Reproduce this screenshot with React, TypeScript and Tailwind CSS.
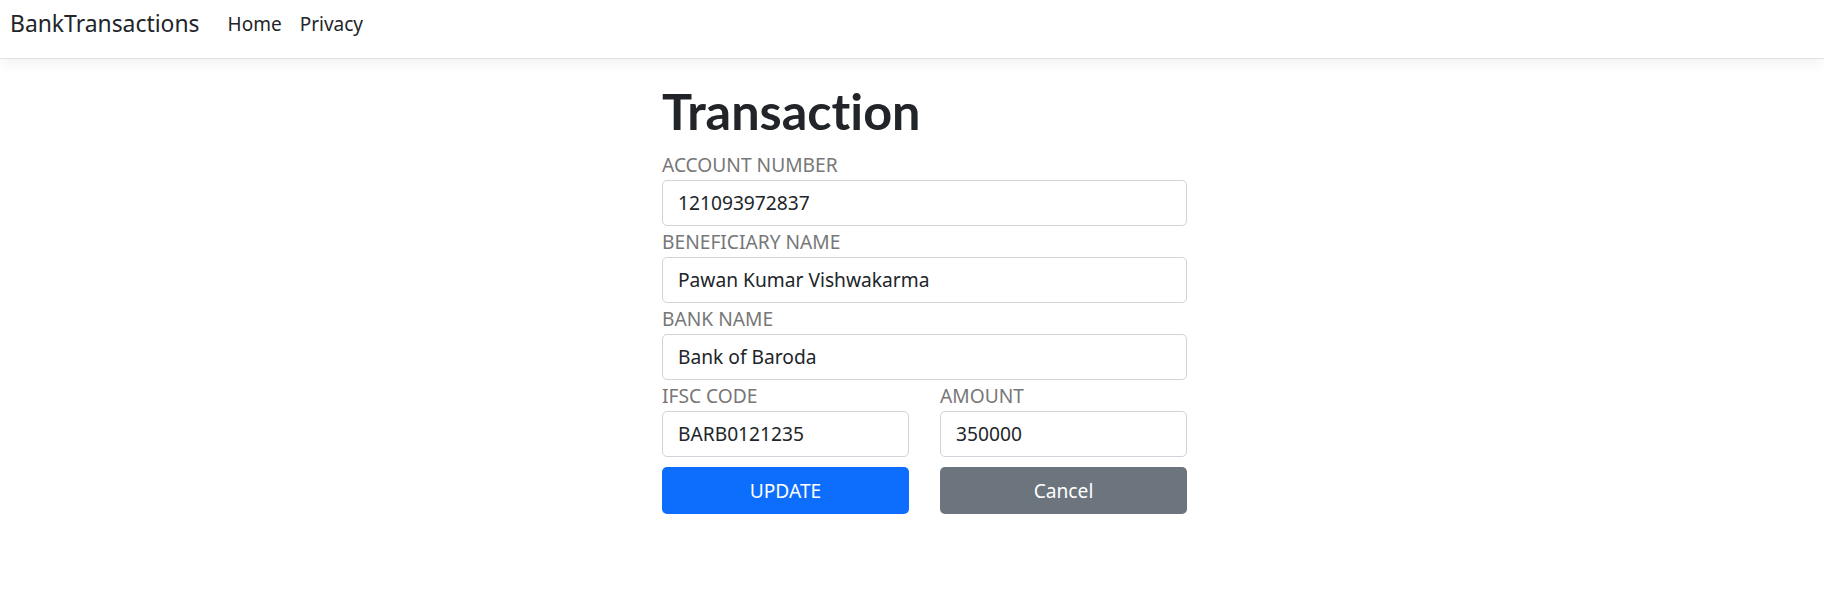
const font = { fontFamily: '"Segoe UI", "Noto Sans", sans-serif' }

function Field({ label, value }: { label: string; value: string }) {
  return (
    <div className="flex flex-col">
      <label className="h-[31px] text-[19.2px] leading-[31px] text-[#777]">{label}</label>
      <div className="flex h-[46px] items-center rounded-[5px] border border-[#ced4da] bg-white px-[15px] text-[19.2px] text-[#212529]">
        {value}
      </div>
    </div>
  )
}

export default function App() {
  return (
    <div className="min-h-[597px] bg-white" style={font}>
      {/* Navbar */}
      <nav className="flex h-[59px] items-start border-b border-[#dee2e6] bg-white pl-[10px] pt-[7px] shadow-[0_5px_14px_rgba(0,0,0,0.05)]">
        <span className="mr-[19px] text-[22.9px] leading-[34px] text-[#212529]">BankTransactions</span>
        <a className="px-[9px] text-[19px] leading-[34px] text-[#212529]">Home</a>
        <a className="px-[9px] text-[19px] leading-[34px] text-[#212529]">Privacy</a>
      </nav>

      {/* Form */}
      <main className="pl-[662px] pt-[22px]">
        <div className="w-[525px]">
          <h1
            className="mb-[8px] text-[50.4px] font-bold leading-[1.2] text-[#212529] [font-variant-ligatures:none]"
            style={{ fontFamily: 'Lato, "Noto Sans", sans-serif' }}
          >
            Transaction
          </h1>
          <Field label="ACCOUNT NUMBER" value="121093972837" />
          <Field label="BENEFICIARY NAME" value="Pawan Kumar Vishwakarma" />
          <Field label="BANK NAME" value="Bank of Baroda" />
          <div className="grid grid-cols-2 gap-x-[31px]">
            <Field label="IFSC CODE" value="BARB0121235" />
            <Field label="AMOUNT" value="350000" />
            <button className="mt-[10px] h-[47px] rounded-[5px] bg-[#0d6efd] text-[19.2px] text-white">UPDATE</button>
            <button className="mt-[10px] h-[47px] rounded-[5px] bg-[#6c757d] text-[19.2px] text-white">Cancel</button>
          </div>
        </div>
      </main>
    </div>
  )
}
